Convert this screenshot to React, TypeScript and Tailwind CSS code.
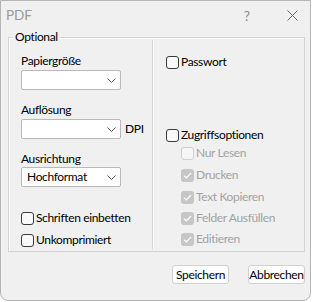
import React from 'react';

const FONT = { fontFamily: 'Lato, "Liberation Sans", sans-serif' };

function Chevron() {
  return (
    <svg width="9" height="5" viewBox="0 0 9 5" className="ml-auto mr-[4px]">
      <path d="M0.5 0.5 L4.5 4.5 L8.5 0.5" fill="none" stroke="#606060" strokeWidth="1" />
    </svg>
  );
}

function Combo({ value }: { value?: string }) {
  return (
    <div className="flex items-center w-[100px] h-[20px] bg-white border border-[#b9b9b9] rounded-[2px] pl-[5px] text-[12px] tracking-[-0.35px] text-black">
      <span>{value}</span>
      <Chevron />
    </div>
  );
}

function Check({ label, state }: { label: string; state: 'on' | 'off' | 'dis' | 'dischecked' }) {
  let box = 'border border-[#3a3a3a] bg-[#f9f9f9]';
  if (state === 'dis') box = 'border border-[#cfcfcf] bg-[#f6f6f6]';
  if (state === 'dischecked') box = 'bg-[#c6c6c6]';
  const disabled = state === 'dis' || state === 'dischecked';
  return (
    <div className="flex items-center h-[16px]">
      <div className={`w-[13px] h-[13px] rounded-[3px] flex items-center justify-center ${box}`}>
        {state === 'dischecked' && (
          <svg width="9" height="7" viewBox="0 0 9 7">
            <path d="M1 3.6 L3.3 5.8 L8 1" fill="none" stroke="#ffffff" strokeWidth="1.2" />
          </svg>
        )}
      </div>
      <span className={`ml-[2px] text-[12px] tracking-[-0.35px] ${disabled ? 'text-[#a2a2a2]' : 'text-black'}`}>{label}</span>
    </div>
  );
}

export default function App() {
  return (
    <div className="w-[316px] h-[302px] bg-white" style={FONT}>
      <div className="w-[311px] h-[301px] bg-[#f0f0f0] border border-[#b5b5b5] rounded-b-[8px] flex flex-col">
        <div className="h-[28px] flex items-center pl-[5px] text-[13.5px]">
          <span className="text-[#9a9a9a]">PDF</span>
          <span className="ml-auto text-[#8a8a8a] text-[14px] mr-[37px]">?</span>
          <svg width="11" height="11" viewBox="0 0 11 11" className="mr-[12px]">
            <path d="M0.5 0.5 L10.5 10.5 M10.5 0.5 L0.5 10.5" stroke="#6a6a6a" strokeWidth="1" />
          </svg>
        </div>

        <div className="relative ml-[7px] mt-[8px] w-[297px] h-[215px] border border-[#d3d3d3] shadow-[inset_1px_1px_0_#ffffff] flex">
          <span className="absolute left-[4px] top-[-9px] px-[2px] bg-[#f0f0f0] text-[12px] tracking-[-0.35px] leading-[16px] text-black">Optional</span>

          <div className="w-[143px] pl-[12px] pt-[15px] flex flex-col text-[12px] tracking-[-0.35px] leading-[16px] text-black">
            <span>Papiergröße</span>
            <div className="mt-[1px]"><Combo /></div>
            <span className="mt-[12px]">Auflösung</span>
            <div className="mt-[1px] flex items-center">
              <Combo />
              <span className="ml-[4px]">DPI</span>
            </div>
            <span className="mt-[12px]">Ausrichtung</span>
            <div className="mt-[0px]"><Combo value="Hochformat" /></div>
            <div className="mt-[23px]"><Check label="Schriften einbetten" state="off" /></div>
            <div className="mt-[6px]"><Check label="Unkomprimiert" state="off" /></div>
          </div>

          <div className="my-[2px] w-[1px] bg-[#d6d6d6] border-r border-white box-content" />

          <div className="flex-1 pl-[12px] pt-[16px] flex flex-col">
            <Check label="Passwort" state="off" />
            <div className="mt-[57px]"><Check label="Zugriffsoptionen" state="off" /></div>
            <div className="pl-[15px] flex flex-col">
              <div className="mt-[2px]"><Check label="Nur Lesen" state="dis" /></div>
              <div className="mt-[6px]"><Check label="Drucken" state="dischecked" /></div>
              <div className="mt-[6px]"><Check label="Text Kopieren" state="dischecked" /></div>
              <div className="mt-[5px]"><Check label="Felder Ausfüllen" state="dischecked" /></div>
              <div className="mt-[5px]"><Check label="Editieren" state="dischecked" /></div>
            </div>
          </div>
        </div>

        <div className="flex justify-end gap-[19px] mt-[13px] mr-[5px] text-[12px] tracking-[-0.35px]">
          <button className="w-[57px] h-[19px] bg-[#fdfdfd] border border-[#d0d0d0] rounded-[3px] text-black leading-none">Speichern</button>
          <button className="w-[57px] h-[19px] bg-[#fdfdfd] border border-[#d0d0d0] rounded-[3px] text-black leading-none">Abbrechen</button>
        </div>
      </div>
    </div>
  );
}
